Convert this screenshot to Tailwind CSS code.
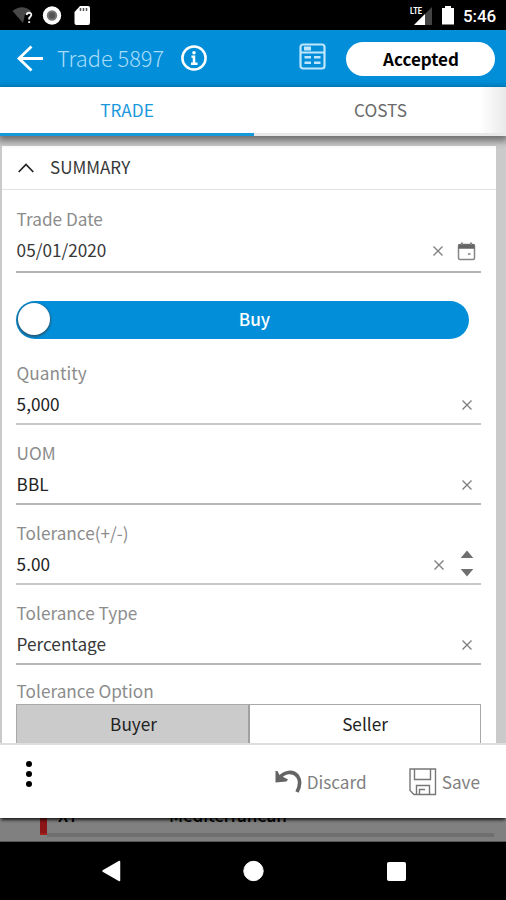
<!DOCTYPE html>
<html lang="en">
<head>
<meta charset="utf-8">
<title>Trade 5897</title>
<script src="https://cdn.jsdelivr.net/npm/@tailwindcss/browser@4"></script>
</head>
<body class="w-[506px] h-[900px] overflow-hidden bg-black font-['Noto_Sans_CJK_SC','Noto_Sans',sans-serif] text-[17.2px] text-[#383838]">
<div class="flex h-[900px] w-[506px] flex-col">
  <!-- status bar -->
  <div class="flex h-[30px] shrink-0 items-center bg-black pl-3 pr-[9px]">
    <svg class="h-[30px] w-[90px]" viewBox="12 0 90 30">
      <path d="M12.500 11Q22 3.500 31 11L30 13L25 14L23 23Z" fill="#484848"/>
      <path d="M26.500 15Q27 12.500 29.300 12.700Q31.600 13 31.200 15.300Q30.800 16.600 29.200 18V19.500M29.200 21.200V23" fill="none" stroke="#eee" stroke-width="1.900"/>
      <circle cx="52" cy="15.500" r="7.200" fill="#777" stroke="#fff" stroke-width="4"/>
      <circle cx="52" cy="15.500" r="3.200" fill="#555"/>
      <path d="M80 6H88Q90 6 90 8V22.500Q90 25 88 25H76.500Q74.500 25 74.500 23V12Z" fill="#fff"/>
      <path d="M80.500 8V11M83.500 8V11M86.500 8V11" stroke="#555" stroke-width="1.500"/>
    </svg>
    <svg class="ml-auto h-[30px] w-[48px]" viewBox="408 0 48 30">
      <path d="M414 25L432 7V25Z" fill="#444"/>
      <path d="M414 25L425 14V25Z" fill="#fff"/>
      <text x="410" y="14" font-family="Roboto" font-size="9.500" font-weight="700" fill="#fff" textLength="12" lengthAdjust="spacingAndGlyphs">LTE</text>
      <path d="M442 8H445V6H451V8H454V24.500H442Z" fill="#fff"/>
    </svg>
    <div class="ml-[7px] w-[34px] font-['Roboto'] text-[17px] font-medium leading-[30px] tracking-[-0.1px] whitespace-nowrap text-white pt-[2px]">5:46</div>
  </div>
  <!-- app bar -->
  <div class="flex h-[57px] shrink-0 items-center bg-[#028ed8] pl-4 pr-[11px]">
    <svg class="h-[28px] w-[28px]" viewBox="16 44.500 28 28" fill="none" stroke="#fff" stroke-width="2.800"><path d="M43 58H19M31.500 46L19 58L31.500 70"/></svg>
    <div class="ml-[13px] w-[109px] whitespace-nowrap text-[21.800px] font-light text-[#a9dcfa]">Trade 5897</div>
    <svg class="ml-[14px] h-[28px] w-[28px]" viewBox="0 0 28 28"><circle cx="14" cy="13" r="11.600" fill="none" stroke="#fff" stroke-width="2.500"/><circle cx="14" cy="7.800" r="1.800" fill="#fff"/><path d="M11.500 11.800H14V18.500M11 18.700H17.500" fill="none" stroke="#fff" stroke-width="2.500"/></svg>
    <svg class="ml-auto mb-[4px] h-[28px] w-[28px]" viewBox="0 0 28 28" fill="none" stroke="#bfe6fc"><rect x="1.500" y="1.500" width="24" height="24" rx="2.500" stroke-width="2.200"/><path d="M2 9.500H25" stroke-width="2"/><path d="M5 5.500H12" stroke-width="4"/><path d="M5.500 14.200H12M15 14.200H21.500M5.500 19.800H12M15 19.800H21.500" stroke-width="2.500"/></svg>
    <div class="ml-[19px] flex h-[34px] w-[149px] items-center justify-center rounded-full bg-white pl-px text-[17px] font-bold text-black">Accepted</div>
  </div>
  <!-- tabs -->
  <div class="relative z-10 flex h-[49px] shrink-0 bg-white bg-linear-to-r from-white from-95% to-[#e9e9e9] text-center leading-[45px] shadow-[0_3px_7px_2px_rgba(0,0,0,0.45)]">
    <div class="w-[254px] border-b-[3px] border-[#1499db] text-[#1a98dc]">TRADE</div>
    <div class="flex-1 border-b-[3px] border-[#e8e8e8] pl-px text-[#6a6a6a]">COSTS</div>
  </div>
  <!-- form -->
  <div class="h-[607px] shrink-0 overflow-hidden bg-[#cacaca] pl-[2px] pr-[10px] pt-[10px]">
    <div class="h-[700px] bg-white">
      <div class="flex h-[44px] items-center border-b border-[#e2e2e2] pl-4">
        <svg class="h-4 w-4" viewBox="0 0 16 16" fill="none" stroke="#222" stroke-width="1.700"><path d="M.7 12L8 4.500L15.300 12"/></svg>
        <span class="mb-[2px] ml-4 text-[17px]">SUMMARY</span>
      </div>
      <div class="pl-[14px] pr-[15px]">
        <div class="h-[83px] border-b-2 border-[#b5b5b5] pt-[13px]">
          <div class="h-[31px] pl-[0.600px] leading-[31px] text-[#8c8c8c]">Trade Date</div>
          <div class="flex h-[32px] items-center pl-[0.600px] leading-[32px]"><span>05/01/2020</span>
            <svg class="ml-auto mt-[2px] h-[12px] w-[12px]" viewBox="0 0 12 12" stroke="#808080" stroke-width="1.400"><path d="M1.500 1.500L10.500 10.500M10.500 1.500L1.500 10.500"/></svg>
            <svg class="ml-[13px] mr-[5px] mt-[3px] h-[19px] w-[19px]" viewBox="0 0 19 19" fill="none" stroke="#858585"><rect x="1.500" y="2.500" width="16" height="15" rx="1.500" stroke-width="1.500"/><path d="M1.500 4.500H17.500" stroke="#666" stroke-width="4.500"/><path d="M5 .5V3M14 .5V3" stroke-width="2"/><path d="M11 12H13.500" stroke-width="1.600"/></svg>
          </div>
        </div>
        <div class="mt-[28px] flex h-[38px] w-[453px] items-center rounded-full bg-[#028ed8] text-white">
          <div class="ml-[2px] mb-[2px] h-[32px] w-[32px] rounded-full bg-white shadow-[0_1px_2px_1px_rgba(60,60,60,0.6)]"></div>
          <div class="mb-[2px] flex-1 pr-[10px] text-center font-medium">Buy</div>
        </div>
        <div class="mt-[5px] h-[81px] border-b-2 border-[#c8c8c8] pt-[13px]">
          <div class="h-[31px] pl-[0.600px] leading-[31px] text-[#8c8c8c]">Quantity</div>
          <div class="flex h-[32px] items-center pl-[0.600px] leading-[32px] text-[#222]"><span>5,000</span>
            <svg class="ml-auto mr-[8px] mt-[2px] h-[12px] w-[12px]" viewBox="0 0 12 12" stroke="#808080" stroke-width="1.400"><path d="M1.500 1.500L10.500 10.500M10.500 1.500L1.500 10.500"/></svg></div>
        </div>
        <div class="h-[80px] border-b-2 border-[#b7b7b7] pt-[12px]">
          <div class="h-[31px] pl-[0.600px] leading-[31px] text-[#8c8c8c]">UOM</div>
          <div class="flex h-[32px] items-center pl-[0.600px] leading-[32px] text-[#222]"><span>BBL</span>
            <svg class="ml-auto mr-[8px] mt-[2px] h-[12px] w-[12px]" viewBox="0 0 12 12" stroke="#808080" stroke-width="1.400"><path d="M1.500 1.500L10.500 10.500M10.500 1.500L1.500 10.500"/></svg></div>
        </div>
        <div class="h-[80px] border-b-2 border-[#c8c8c8] pt-[12px]">
          <div class="h-[31px] pl-[0.600px] leading-[31px] text-[#8c8c8c]">Tolerance(+/-)</div>
          <div class="flex h-[32px] items-center pl-[0.600px] leading-[32px] text-[#222]"><span>5.00</span>
            <svg class="ml-auto mt-[2px] h-[12px] w-[12px]" viewBox="0 0 12 12" stroke="#808080" stroke-width="1.400"><path d="M1.500 1.500L10.500 10.500M10.500 1.500L1.500 10.500"/></svg>
            <svg class="ml-[15px] mr-[7px] h-[30px] w-[14px]" viewBox="0 0 14 30" fill="#707070"><path d="M.7 9L7 1.500L13.300 9ZM.7 20L7 27.500L13.300 20Z"/></svg></div>
        </div>
        <div class="h-[80px] border-b-2 border-[#b7b7b7] pt-[12px]">
          <div class="h-[31px] pl-[0.600px] leading-[31px] text-[#8c8c8c]">Tolerance Type</div>
          <div class="flex h-[32px] items-center pl-[0.600px] leading-[32px]"><span>Percentage</span>
            <svg class="ml-auto mr-[8px] mt-[2px] h-[12px] w-[12px]" viewBox="0 0 12 12" stroke="#808080" stroke-width="1.400"><path d="M1.500 1.500L10.500 10.500M10.500 1.500L1.500 10.500"/></svg></div>
        </div>
        <div class="h-[39px] pl-[0.600px] pt-[10px] leading-[31px] text-[#8c8c8c]">Tolerance Option</div>
        <div class="flex h-[60px] border border-[#a9a9a9] text-center leading-[38px] text-[#222]">
          <div class="w-[233px] border-r-2 border-[#a0a0a0] bg-[#cbcbcb] pl-[2px]">Buyer</div>
          <div class="flex-1">Seller</div>
        </div>
      </div>
    </div>
  </div>
  <!-- footer actions -->
  <div class="relative z-10 flex h-[75px] shrink-0 items-center border-t-2 border-[#dedede] bg-white pl-[24px] pr-[25px] text-[#808080] shadow-[0_3px_3px_-1px_rgba(0,0,0,0.8)]">
    <svg class="mb-[15px] h-[30px] w-[10px]" viewBox="0 0 10 30"><circle cx="5" cy="5" r="3"/><circle cx="5" cy="15" r="3"/><circle cx="5" cy="25" r="3"/></svg>
    <svg class="ml-auto h-[28px] w-[28px]" viewBox="0 0 28 28"><path d="M4.500 10C9 3.500 18 2.500 22.500 8Q27 14.500 22 24" fill="none" stroke="#646464" stroke-width="3.600"/><path d="M.5 3L2.500 3L4.500 7L13 11.500L11.500 13.500L.5 14.500Z" fill="#646464"/></svg>
    <span class="ml-[4px]">Discard</span>
    <svg class="ml-[42px] h-[28px] w-[28px]" viewBox="0 0 28 28" fill="none" stroke="#777" stroke-width="1.400"><path d="M1 1H26.500V26.500H5L1 22.500ZM5.500 1V11.500H21.500V1M7.500 26V17.500H20.500V26M10.500 26V21.500H16"/></svg>
    <span class="ml-[5px] mr-px">Save</span>
  </div>
  <!-- dimmed page behind the dialog -->
  <div class="flex h-[24px] shrink-0 items-start overflow-hidden border-b border-[#555] bg-[#808080] text-[17px] font-medium leading-[17px] text-black">
    <div class="ml-[40px] h-[17px] w-[7px] shrink-0 border-b-2 border-[#a02020] bg-[#8c1616]"></div>
    <div class="h-[19px] w-[447px] shrink-0 border-b-4 border-[#6f6f6f]">
      <div class="-mt-[12px] flex pl-[10px]"><span class="w-[112px] pl-px">XY</span><span class="tracking-[-0.100px]">Mediterranean</span></div>
    </div>
  </div>
  <!-- navigation bar -->
  <div class="flex h-[58px] shrink-0 items-center justify-center bg-black">
    <svg class="h-[58px] w-[306px]" viewBox="100 842 306 58" fill="#fff" stroke="#fff" stroke-linejoin="round"><path d="M103 871L119.500 861.500V880.500Z" stroke-width="1.500"/><circle cx="253.500" cy="871" r="9.700"/><rect x="387.500" y="862.500" width="18" height="18" rx="1"/></svg>
  </div>
</div>
</body>
</html>
